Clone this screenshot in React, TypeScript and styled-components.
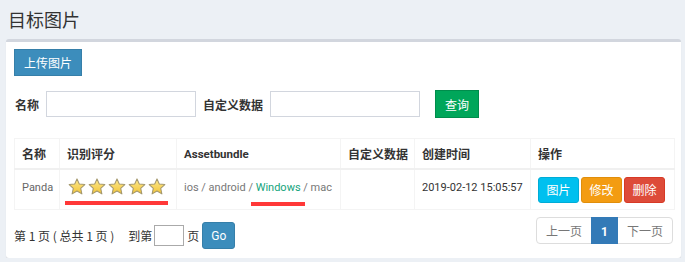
import React from "react";
import styled, { createGlobalStyle } from "styled-components";

const Global = createGlobalStyle`
  html, body { margin: 0; padding: 0; background: #ecf0f5; }
  body {
    font-family: "Noto Sans CJK SC", "Noto Sans", sans-serif;
    font-size: 12px;
    color: #333;
  }
  * { box-sizing: border-box; }
`;

const Page = styled.div`
  padding: 6px 4px 0 6px;
`;

const Title = styled.h1`
  margin: 0 0 7px 2px;
  font-size: 18px;
  line-height: 26px;
  font-weight: 400;
  color: #333;
`;

const Box = styled.section`
  background: #fff;
  border-top: 3px solid #d2d6de;
  border-radius: 3px;
  box-shadow: 0 1px 1px rgba(0, 0, 0, 0.1);
  padding: 7px 7px 9px 8px;
  display: flex;
  flex-direction: column;
`;

const Latin = styled.span<{ $size?: number }>`
  font-family: Roboto, "Noto Sans CJK SC", sans-serif;
  font-size: ${(p) => p.$size ?? 11}px;
`;

const Toolbar = styled.div`
  display: flex;
`;

const FlatButton = styled.button<{ $bg: string; $border: string; $h: number }>`
  height: ${(p) => p.$h}px;
  padding: 0 9px;
  font: inherit;
  font-size: 12px;
  color: #fff;
  background: ${(p) => p.$bg};
  border: 1px solid ${(p) => p.$border};
  border-radius: 0;
`;

const SearchRow = styled.div`
  display: flex;
  align-items: center;
  margin-top: 14px;
  padding-left: 1px;
  height: 28px;
`;

const Label = styled.label`
  font-weight: 700;
  margin-right: 7px;
  color: #333;
`;

const TextInput = styled.input`
  width: 150px;
  height: 26px;
  border: 1px solid #d2d6de;
  margin: 0 7px 0 0;
  font: inherit;
`;

const QueryGap = styled.span`
  width: 8px;
`;

const Table = styled.table`
  margin-top: 20px;
  width: 100%;
  table-layout: fixed;
  border-collapse: collapse;
  border: 1px solid #f4f4f4;
`;

const Th = styled.th`
  text-align: left;
  font-weight: 700;
  color: #333;
  padding: 6px 7px;
  line-height: 16px;
  border: 1px solid #f4f4f4;
  border-bottom: 2px solid #f0f0f0;
  white-space: nowrap;
`;

const Td = styled.td<{ $dark?: boolean }>`
  vertical-align: top;
  padding: 7px 7px 6px;
  line-height: 18px;
  border: 1px solid #f4f4f4;
  color: ${(p) => (p.$dark ? "#333" : "#666")};
  white-space: nowrap;
`;

const StarCell = styled.div`
  display: flex;
  flex-direction: column;
  align-items: flex-start;
  margin-bottom: -4px;
`;

const Stars = styled.div`
  display: flex;
  gap: 2px;
  margin: 1px 0 0 1px;
`;

const RedMark = styled.div<{ $w: number }>`
  width: ${(p) => p.$w}px;
  height: 4px;
  background: #ff3838;
  margin-top: 6px;
  margin-left: -2px;
`;

const Platform = styled.span<{ $on?: boolean }>`
  color: ${(p) => (p.$on ? "#13a47c" : "#777")};
  position: relative;
  ${(p) =>
    p.$on
      ? `&::after {
    content: "";
    position: absolute;
    left: -5px;
    right: -4px;
    top: 21px;
    height: 4px;
    background: #ff3838;
  }`
      : ""}
`;

const Actions = styled.div`
  display: flex;
  gap: 2px;
`;

const ActionButton = styled.button<{ $bg: string; $border: string }>`
  height: 26px;
  width: 41px;
  padding: 0;
  font: inherit;
  font-size: 12px;
  color: #fff;
  background: ${(p) => p.$bg};
  border: 1px solid ${(p) => p.$border};
  border-radius: 3px;
`;

const Footer = styled.div`
  display: flex;
  justify-content: space-between;
  align-items: flex-start;
`;

const PageInfo = styled.div`
  display: flex;
  align-items: center;
  margin-top: 12px;
  color: #333;
`;

const JumpLabel = styled.span`
  margin-left: 14px;
`;

const JumpInput = styled.input`
  width: 30px;
  height: 21px;
  margin: 0 3px 0 2px;
  border: 1px solid #aaa;
  font: inherit;
`;

const GoButton = styled.button`
  margin-left: 3px;
  width: 33px;
  height: 27px;
  padding: 0;
  font-family: Roboto, sans-serif;
  font-size: 12px;
  color: #fff;
  background: #3c8dbc;
  border: 1px solid #367fa9;
  border-radius: 3px;
`;

const Pager = styled.ul`
  display: flex;
  list-style: none;
  margin: 7px 1px 0 0;
  padding: 0;
`;

const PageItem = styled.li<{ $active?: boolean; $pos?: "first" | "last" }>`
  height: 27px;
  line-height: 25px;
  padding: 0 9px;
  border: 1px solid ${(p) => (p.$active ? "#337ab7" : "#ddd")};
  margin-left: ${(p) => (p.$pos === "first" ? 0 : -1)}px;
  background: ${(p) => (p.$active ? "#337ab7" : "#fff")};
  color: ${(p) => (p.$active ? "#fff" : "#777")};
  font-weight: ${(p) => (p.$active ? 700 : 400)};
  border-radius: ${(p) =>
    p.$pos === "first" ? "4px 0 0 4px" : p.$pos === "last" ? "0 4px 4px 0" : "0"};
  position: relative;
  z-index: ${(p) => (p.$active ? 1 : 0)};
`;

const Star = () => (
  <svg width="18" height="17" viewBox="0 0 24 23">
    <defs>
      <linearGradient id="sg" x1="0" y1="0" x2="0" y2="1">
        <stop offset="0" stopColor="#fde98f" />
        <stop offset="1" stopColor="#f2c437" />
      </linearGradient>
    </defs>
    <polygon
      points="12,1.2 15.1,8.1 22.6,8.9 17,14 18.6,21.5 12,17.6 5.4,21.5 7,14 1.4,8.9 8.9,8.1"
      fill="url(#sg)"
      stroke="#a3976c"
      strokeWidth="1.4"
      strokeLinejoin="round"
    />
  </svg>
);

export default function App() {
  return (
    <Page>
      <Global />
      <Title>目标图片</Title>
      <Box>
        <Toolbar>
          <FlatButton $bg="#3c8dbc" $border="#367fa9" $h={27}>
            上传图片
          </FlatButton>
        </Toolbar>
        <SearchRow>
          <Label>名称</Label>
          <TextInput />
          <Label>自定义数据</Label>
          <TextInput />
          <QueryGap />
          <FlatButton $bg="#00a65a" $border="#008d4c" $h={28}>
            查询
          </FlatButton>
        </SearchRow>
        <Table>
          <colgroup>
            <col style={{ width: 45 }} />
            <col style={{ width: 117 }} />
            <col style={{ width: 164 }} />
            <col style={{ width: 74 }} />
            <col style={{ width: 116 }} />
            <col style={{ width: 144 }} />
          </colgroup>
          <thead>
            <tr>
              <Th>名称</Th>
              <Th>识别评分</Th>
              <Th>
                <Latin $size={11.5}>Assetbundle</Latin>
              </Th>
              <Th>自定义数据</Th>
              <Th>创建时间</Th>
              <Th>操作</Th>
            </tr>
          </thead>
          <tbody>
            <tr>
              <Td>
                <Latin>Panda</Latin>
              </Td>
              <Td>
                <StarCell>
                  <Stars>
                    <Star />
                    <Star />
                    <Star />
                    <Star />
                    <Star />
                  </Stars>
                  <RedMark $w={103} />
                </StarCell>
              </Td>
              <Td>
                <Latin>
                  <Platform>ios / android / </Platform>
                  <Platform $on>Windows</Platform>
                  <Platform> / mac</Platform>
                </Latin>
              </Td>
              <Td />
              <Td $dark>
                <Latin>2019-02-12 15:05:57</Latin>
              </Td>
              <Td>
                <Actions>
                  <ActionButton $bg="#00c0ef" $border="#00acd6">
                    图片
                  </ActionButton>
                  <ActionButton $bg="#f39c12" $border="#e08e0b">
                    修改
                  </ActionButton>
                  <ActionButton $bg="#dd4b39" $border="#d73925">
                    删除
                  </ActionButton>
                </Actions>
              </Td>
            </tr>
          </tbody>
        </Table>
        <Footer>
          <PageInfo>
            <span>第 1 页 ( 总共 1 页 )</span>
            <JumpLabel>到第</JumpLabel>
            <JumpInput />
            <span>页</span>
            <GoButton>Go</GoButton>
          </PageInfo>
          <Pager>
            <PageItem $pos="first">上一页</PageItem>
            <PageItem $active>
              <Latin $size={12}>1</Latin>
            </PageItem>
            <PageItem $pos="last">下一页</PageItem>
          </Pager>
        </Footer>
      </Box>
    </Page>
  );
}
